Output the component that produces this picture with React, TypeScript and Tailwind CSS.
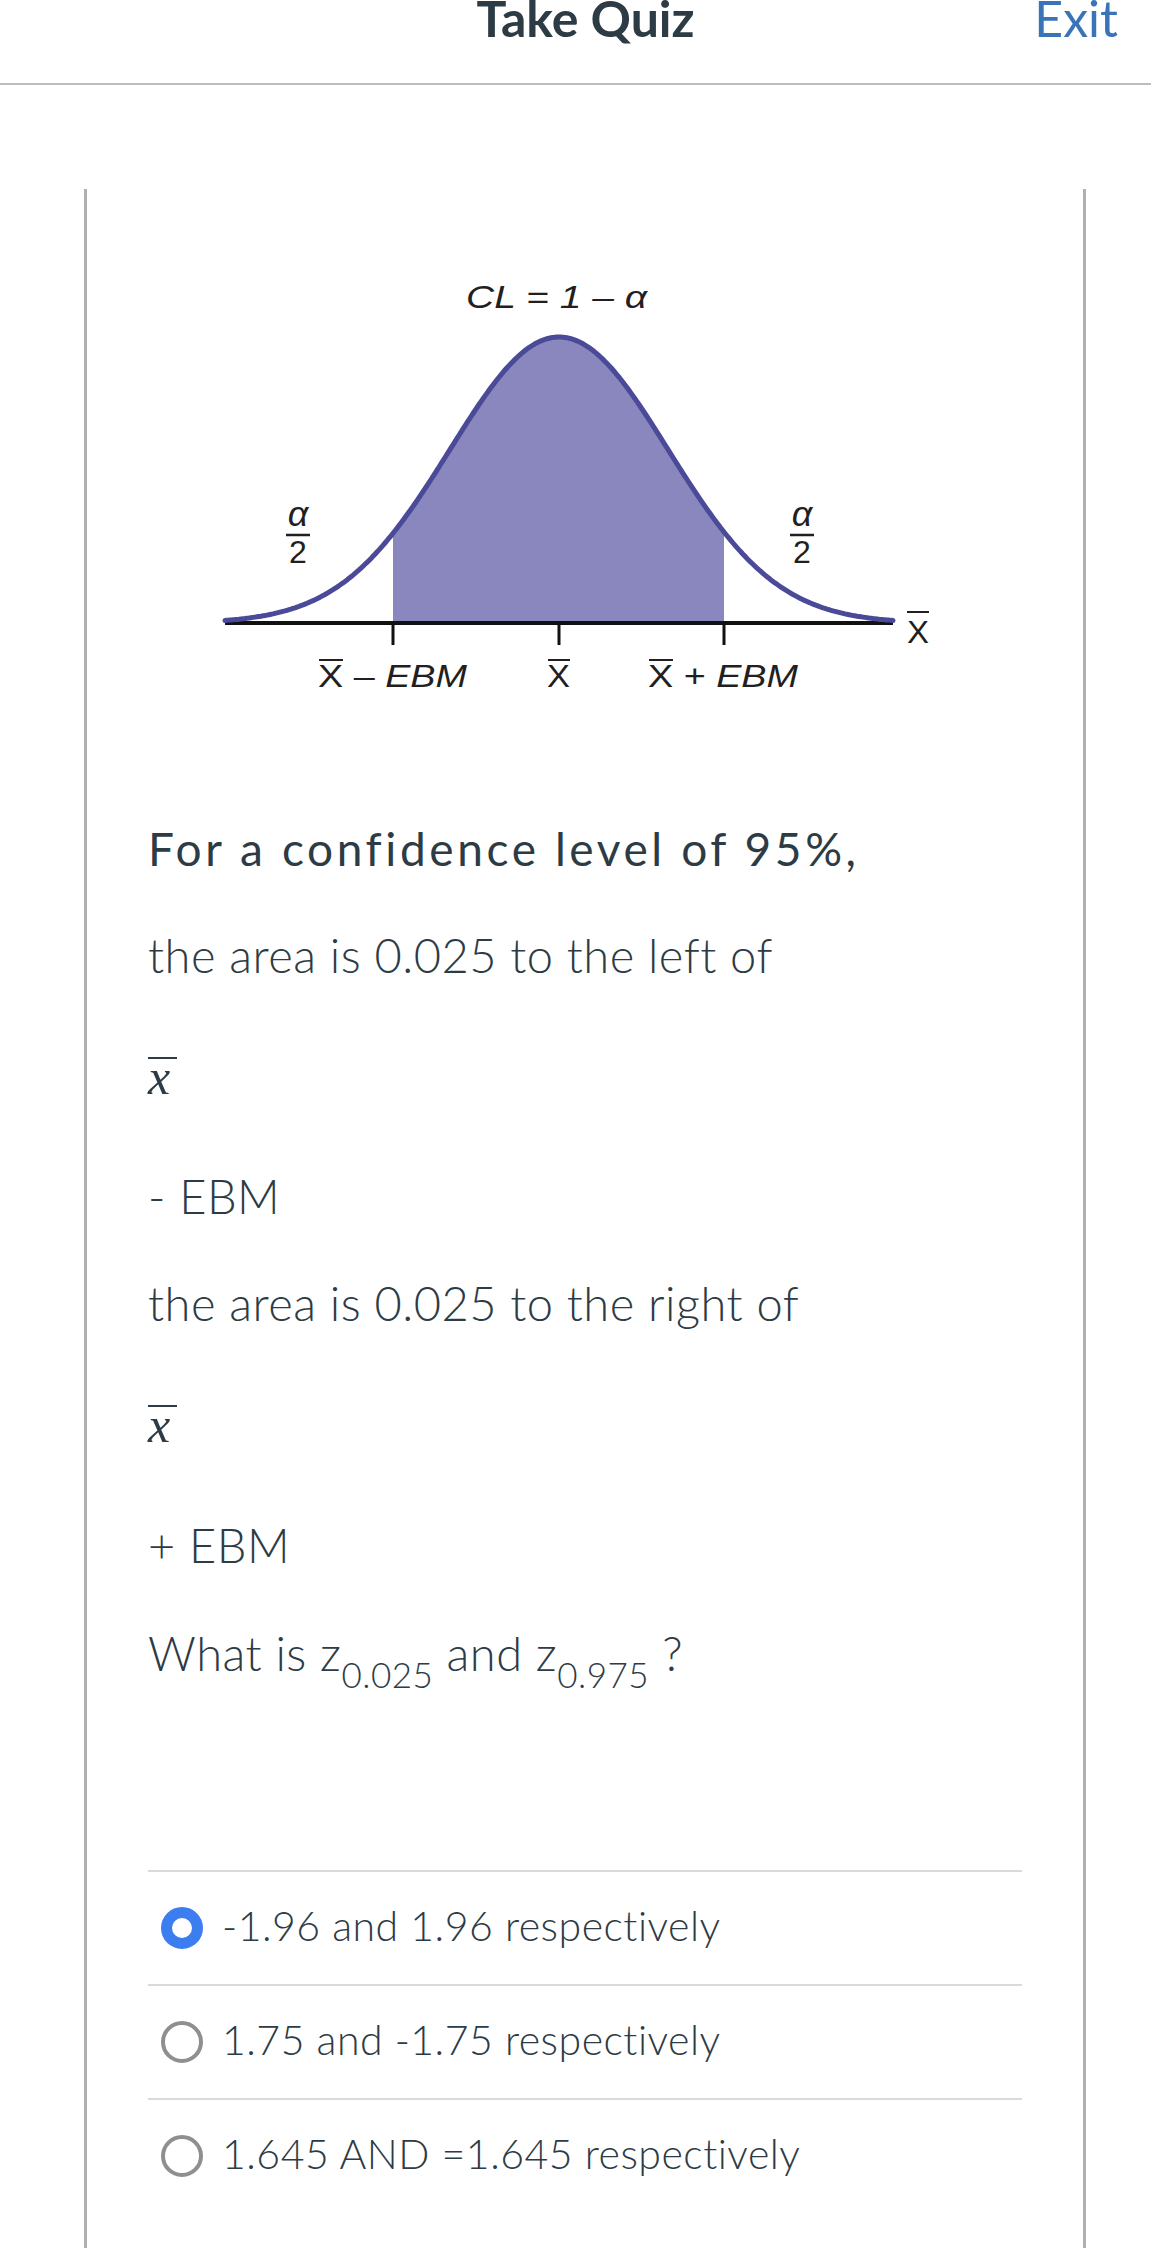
const ink = "#2d3b45";

// normal curve from the confidence interval figure, drawn in page coordinates
function ConfidenceChart() {
  const mu = 559;
  const sd = 109;
  const peak = 286;
  const base = 623;
  const y = (x: number) => base - peak * Math.exp(-((x - mu) ** 2) / (2 * sd * sd));

  let curve = "";
  for (let x = 225; x <= 893; x += 2) {
    curve += (x === 225 ? "M" : "L") + x + " " + y(x).toFixed(1) + " ";
  }
  let area = `M393 ${base} `;
  for (let x = 393; x <= 724; x += 1) area += `L${x} ${y(x).toFixed(1)} `;
  area += `L724 ${base} Z`;

  const label = { fontFamily: "'Liberation Sans', Arial, sans-serif", fill: "#231f20" };

  return (
    <svg width="820" height="450" viewBox="148 250 820 450" className="block">
      <path d={area} fill="#8987bd" />
      <line x1="225" y1={base} x2="893" y2={base} stroke="#111" strokeWidth="4" />
      <path d={curve} fill="none" stroke="#4b4a98" strokeWidth="5" strokeLinecap="round" />
      {[393, 559, 724].map((x) => (
        <line key={x} x1={x} y1={base} x2={x} y2={645} stroke="#111" strokeWidth="3" />
      ))}

      <text x="466" y="308" fontSize="32" fontStyle="italic" textLength="181" lengthAdjust="spacingAndGlyphs" style={label}>
        CL = 1 – α
      </text>

      {[298, 802].map((cx) => (
        <g key={cx}>
          <text x={cx} y="526" fontSize="36" fontStyle="italic" textAnchor="middle" style={label}>
            α
          </text>
          <line x1={cx - 12} y1="535" x2={cx + 12} y2="535" stroke="#231f20" strokeWidth="2.5" />
          <text x={cx} y="563" fontSize="32" textAnchor="middle" style={label}>
            2
          </text>
        </g>
      ))}

      <text x="318" y="687" fontSize="32" textLength="149" lengthAdjust="spacingAndGlyphs" style={label}>
        X – <tspan fontStyle="italic">EBM</tspan>
      </text>
      <line x1="319" y1="660" x2="343" y2="660" stroke="#231f20" strokeWidth="2" />

      <text x="547" y="687" fontSize="32" textLength="23" lengthAdjust="spacingAndGlyphs" style={label}>
        X
      </text>
      <line x1="548" y1="660" x2="570" y2="660" stroke="#231f20" strokeWidth="2" />

      <text x="648" y="687" fontSize="32" textLength="150" lengthAdjust="spacingAndGlyphs" style={label}>
        X + <tspan fontStyle="italic">EBM</tspan>
      </text>
      <line x1="649" y1="660" x2="673" y2="660" stroke="#231f20" strokeWidth="2" />

      <text x="907" y="643" fontSize="32" textLength="22" lengthAdjust="spacingAndGlyphs" style={label}>
        X
      </text>
      <line x1="907" y1="612" x2="929" y2="612" stroke="#231f20" strokeWidth="2" />
    </svg>
  );
}

function XBar({ className = "" }: { className?: string }) {
  return (
    <div className={"flex flex-col items-start " + className}>
      <div className="h-[2px] w-[29px] bg-[#2d3b45]" />
      <div className="font-['Liberation_Serif',serif] text-[50px] italic leading-[36px] text-[#2d3b45]">x</div>
    </div>
  );
}

const options = [
  { text: "-1.96 and 1.96 respectively", picked: true },
  { text: "1.75 and -1.75 respectively", picked: false },
  { text: "1.645 AND =1.645 respectively", picked: false },
];

export default function App() {
  const body = "text-[47px] leading-[56px] font-light tracking-[0.5px]";

  return (
    <div className="flex min-h-screen flex-col bg-white font-['Lato',sans-serif]" style={{ color: ink }}>
      <header className="grid h-[85px] grid-cols-[1fr_auto_1fr] border-b-2 border-[#bdbdbd]">
        <div />
        <div className="-mt-[7px] ml-[20px] text-[50px] font-bold leading-[50px]">Take Quiz</div>
        <div className="-mt-[7px] justify-self-end pr-[33px] text-[50px] leading-[50px] text-[#3a74b8]">Exit</div>
      </header>

      <main className="ml-[84px] mt-[104px] flex w-[1002px] flex-1 flex-col border-x-[3px] border-[#b0b0b0] px-[61px]">
        <div className="mt-[61px]">
          <ConfidenceChart />
        </div>

        <p className="mt-[121px] text-[46px] font-normal leading-[56px] tracking-[3.6px]">For a confidence level of 95%,</p>
        <p className={"mt-[50px] " + body}>the area is 0.025 to the left of</p>
        <XBar className="mt-[74px]" />
        <p className={"mt-[73px] " + body}>- EBM</p>
        <p className={"mt-[51px] " + body}>the area is 0.025 to the right of</p>
        <XBar className="mt-[74px]" />
        <p className={"mt-[74px] " + body}>+ EBM</p>
        <p className={"mt-[52px] " + body}>
          What is z<sub className="align-[-8px] text-[35px]">0.025</sub> and z
          <sub className="align-[-8px] text-[35px]">0.975</sub> ?
        </p>

        <ul className="mt-[189px]">
          {options.map((o) => (
            <li key={o.text} className="flex h-[114px] items-center border-t-2 border-[#dadada]">
              <span
                className={
                  "ml-[13px] h-[42px] w-[42px] shrink-0 rounded-full " +
                  (o.picked ? "border-[11px] border-[#3c7ef0]" : "border-[4px] border-[#8f8f8f]")
                }
              />
              <span className="mb-[4px] ml-[19px] text-[41px] font-light leading-[48px] tracking-[0.5px]">{o.text}</span>
            </li>
          ))}
        </ul>
      </main>
    </div>
  );
}
